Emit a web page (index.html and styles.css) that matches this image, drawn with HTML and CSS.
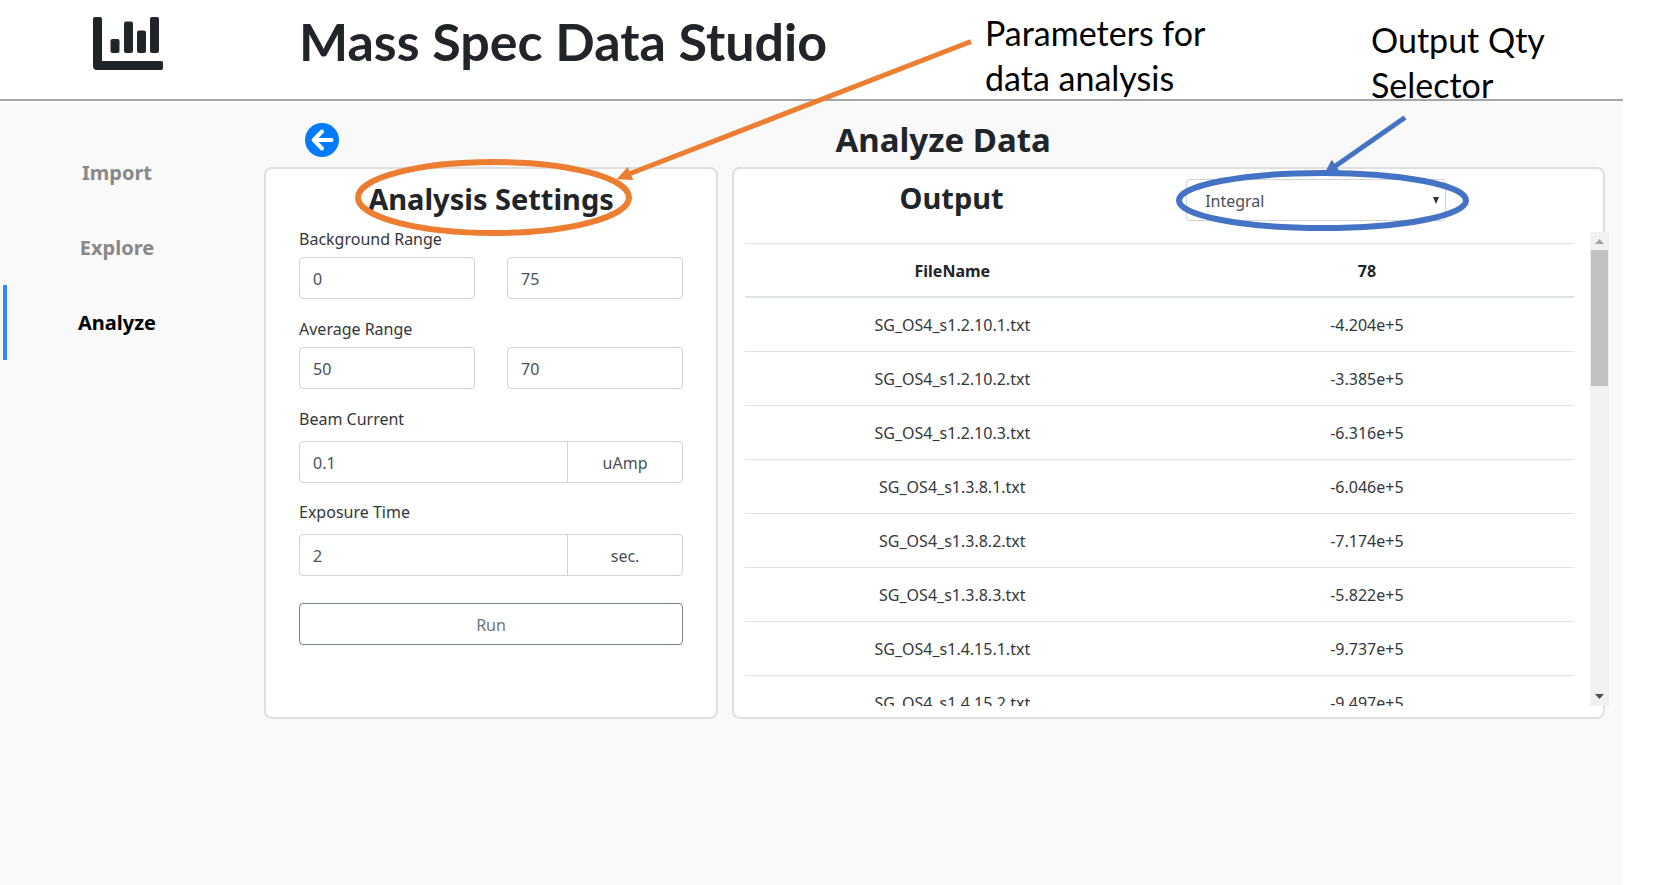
FILE: index.html
```html
<!DOCTYPE html>
<html lang="en">
<head>
<meta charset="utf-8">
<title>Mass Spec Data Studio</title>
<link rel="stylesheet" href="styles.css">
</head>
<body>
<div class="app">
  <header class="topbar">
    <svg class="logo" viewBox="0 0 70 54" aria-hidden="true">
      <path d="M2 0h5q2 0 2 2v42h59q2 0 2 2v5q0 2-2 2H4q-4 0-4-4V2q0-2 2-2z"/>
      <rect x="17.500" y="22" width="9" height="14" rx="2"/>
      <rect x="31" y="4.500" width="9" height="31.500" rx="2"/>
      <rect x="44" y="13.500" width="9" height="22.500" rx="2"/>
      <rect x="57" y="0" width="9" height="36" rx="2"/>
    </svg>
    <h1 class="brand">Mass Spec Data Studio</h1>
  </header>
  <div class="body">
    <nav class="sidebar">
      <a class="nav-link" href="#import">Import</a>
      <a class="nav-link" href="#explore">Explore</a>
      <a class="nav-link active" href="#analyze">Analyze</a>
    </nav>
    <main class="main">
      <div class="page-head">
        <button class="back" type="button" aria-label="Back">
          <svg viewBox="0 0 34 34" aria-hidden="true">
            <circle cx="17" cy="17" r="17" fill="#007bff"/>
            <path d="M17 8.500L8.700 17l8.300 8.500M9.500 17H26.500" fill="none" stroke="#fff" stroke-width="4" stroke-linecap="round" stroke-linejoin="round"/>
          </svg>
        </button>
        <h2 class="page-title">Analyze Data</h2>
      </div>
      <div class="cards">
        <form class="card settings">
          <h3 class="card-title">Analysis Settings</h3>
          <label class="label" for="bg-min">Background Range</label>
          <div class="pair">
            <input class="field" id="bg-min" type="text" value="0">
            <input class="field" type="text" value="75" aria-label="Background range end">
          </div>
          <label class="label" for="avg-min">Average Range</label>
          <div class="pair">
            <input class="field" id="avg-min" type="text" value="50">
            <input class="field" type="text" value="70" aria-label="Average range end">
          </div>
          <label class="label" for="beam">Beam Current</label>
          <div class="group">
            <input class="field" id="beam" type="text" value="0.1">
            <span class="unit">uAmp</span>
          </div>
          <label class="label" for="time">Exposure Time</label>
          <div class="group">
            <input class="field" id="time" type="text" value="2">
            <span class="unit">sec.</span>
          </div>
          <button class="run" type="button">Run</button>
        </form>
        <section class="card output">
          <div class="output-head">
            <h3 class="card-title">Output</h3>
            <div class="select-wrap">
              <select class="field select" aria-label="Output quantity"><option>Integral</option></select>
              <svg class="caret" viewBox="0 0 6 7" aria-hidden="true"><path d="M0 0h6L3 7z"/></svg>
            </div>
          </div>
          <div class="scroller">
            <div class="viewport">
              <table class="results">
                <thead><tr><th>FileName</th><th>78</th></tr></thead>
                <tbody>
                  <tr><td>SG_OS4_s1.2.10.1.txt</td><td>-4.204e+5</td></tr>
                  <tr><td>SG_OS4_s1.2.10.2.txt</td><td>-3.385e+5</td></tr>
                  <tr><td>SG_OS4_s1.2.10.3.txt</td><td>-6.316e+5</td></tr>
                  <tr><td>SG_OS4_s1.3.8.1.txt</td><td>-6.046e+5</td></tr>
                  <tr><td>SG_OS4_s1.3.8.2.txt</td><td>-7.174e+5</td></tr>
                  <tr><td>SG_OS4_s1.3.8.3.txt</td><td>-5.822e+5</td></tr>
                  <tr><td>SG_OS4_s1.4.15.1.txt</td><td>-9.737e+5</td></tr>
                  <tr><td>SG_OS4_s1.4.15.2.txt</td><td>-9.497e+5</td></tr>
                </tbody>
              </table>
            </div>
            <div class="scrollbar">
              <svg class="scroll-arrow" viewBox="0 0 19 18" aria-hidden="true"><path d="M5 12h9L9.500 7z" fill="#a3a3a3"/></svg>
              <div class="track"><div class="thumb"></div></div>
              <svg class="scroll-arrow" viewBox="0 0 19 18" aria-hidden="true"><path d="M5 6h9L9.500 11z" fill="#505050"/></svg>
            </div>
          </div>
        </section>
      </div>
    </main>
  </div>
</div>
<svg class="marks" width="1664" height="260" aria-hidden="true">
  <g fill="none" stroke="#ed7d31" stroke-width="6">
    <ellipse cx="493.500" cy="197.500" rx="135.500" ry="35.500"/>
    <path d="M971 41.500L629 174" stroke-width="5"/>
  </g>
  <path d="M616.500 179.300L627.700 167L633.300 180z" fill="#ed7d31"/>
  <g fill="none" stroke="#4472c4" stroke-width="6">
    <ellipse cx="1322.500" cy="200.500" rx="143.500" ry="27.500"/>
    <path d="M1405 117.500L1334 167" stroke-width="5"/>
  </g>
  <path d="M1325 172.500L1331.700 159.700L1339.500 171z" fill="#4472c4"/>
</svg>
<p class="note note-params">Parameters for<br>data analysis</p>
<p class="note note-output">Output Qty<br>Selector</p>
</body>
</html>
```
FILE: styles.css
```css
* { box-sizing: border-box; }
body {
  margin: 0;
  position: relative;
  background: #fff;
  color: #212529;
  font: 16px/24px "Noto Sans", "Open Sans", sans-serif;
}
h1, h2, h3, p { margin: 0; }
.app {
  width: 97.55%;
  min-height: 100vh;
  display: flex;
  flex-direction: column;
  background: #f9f9f9;
}
.topbar {
  display: flex;
  align-items: flex-start;
  height: 101px;
  padding: 17px 0 0 93px;
  gap: 136px;
  background: #fff;
  border-bottom: 2px solid #a6a8a7;
}
.logo { width: 70px; height: 54px; fill: #212529; }
.brand { font: 700 52px/48px Lato, sans-serif; }
.body { flex: 1; display: flex; }
.sidebar {
  width: 264px;
  padding: 34px 0 0 3px;
  flex: none;
}
.nav-link {
  display: flex;
  align-items: center;
  justify-content: center;
  width: 224px;
  height: 75px;
  border-left: 4px solid transparent;
  color: #888;
  font-size: 20px;
  font-weight: 700;
  text-decoration: none;
}
.nav-link.active { border-color: #2f86ff; color: #000; }
.main { flex: 1; padding: 16px 18px 0 0; }
.page-head {
  display: grid;
  grid-template-columns: 1fr auto 1fr;
  align-items: center;
  height: 50px;
  padding: 0 0 5px 17px;
}
.back {
  width: 34px;
  height: 34px;
  margin-left: 24px;
  padding: 0;
  border: 0;
  background: none;
}
.back svg { display: block; }
.page-title { font-size: 33px; line-height: 46px; }
.cards {
  display: grid;
  grid-template-columns: minmax(0, 13fr) minmax(0, 25fr);
  gap: 14px;
}
.card {
  height: 552px;
  background: #fff;
  border: 2px solid #dfdfdf;
  border-radius: 8px;
}
.card-title { font-size: 29px; line-height: 38px; text-align: center; }
.settings { display: flex; flex-direction: column; padding: 11px 33px; }
.label { margin: 7px 0 6px; color: #33373b; }
.settings .card-title + .label { margin-top: 9px; }
.pair { display: grid; grid-template-columns: 1fr 1fr; gap: 32px; margin-bottom: 11px; }
.field {
  width: 100%;
  min-width: 0;
  height: 42px;
  padding: 2px 13px 0;
  background: #fff;
  border: 1px solid #ced4da;
  border-radius: 4px;
  color: #495057;
  font: inherit;
}
.group { display: flex; margin: 4px 0 10px; }
.group .field { flex: 1; border-radius: 4px 0 0 4px; }
.unit {
  width: 116px;
  height: 42px;
  margin-left: -1px;
  border: 1px solid #ced4da;
  border-radius: 0 4px 4px 0;
  color: #495057;
  line-height: 42px;
  text-align: center;
}
.run {
  height: 42px;
  margin-top: 17px;
  padding: 2px 0 0;
  background: #fff;
  border: 1px solid #7d858c;
  border-radius: 4px;
  color: #6c757d;
  font: inherit;
}
.output { display: flex; flex-direction: column; padding: 10px 0 11px 11px; }
.output-head {
  display: grid;
  grid-template-columns: 1fr 1fr;
  padding-right: 32px;
  height: 53px;
}
.select-wrap { position: relative; width: 260px; height: 42px; margin-left: 28px; }
.select { appearance: none; padding: 2px 18px 0; }
.caret { position: absolute; top: 18px; right: 7px; width: 6px; height: 7px; fill: #333; }
.scroller { flex: 1; min-height: 0; display: flex; gap: 16px; margin-right: -6px; }
.viewport { flex: 1; overflow: hidden; padding-top: 11px; }
.results { width: 100%; table-layout: fixed; border-collapse: separate; border-spacing: 0; text-align: center; }
.results th, .results td { height: 54px; padding: 1px 12px 0; border-top: 1px solid #dee2e6; }
.results th { border-bottom: 1px solid #dee2e6; }
.results td { color: #33373b; }
.scrollbar { position: relative; width: 19px; display: flex; flex-direction: column; background: #f1f1f1; }
.scroll-arrow { display: block; width: 19px; height: 18px; }
.track { flex: 1; padding: 0 1px; }
.thumb { height: 31%; background: #c1c1c1; }
.marks { position: absolute; top: 0; left: 0; pointer-events: none; }
.note { position: absolute; color: #000; font: 400 34px/45px Lato, sans-serif; white-space: nowrap; }
.note-params { left: 985px; top: 10px; }
.note-output { left: 1371px; top: 17px; }
```
